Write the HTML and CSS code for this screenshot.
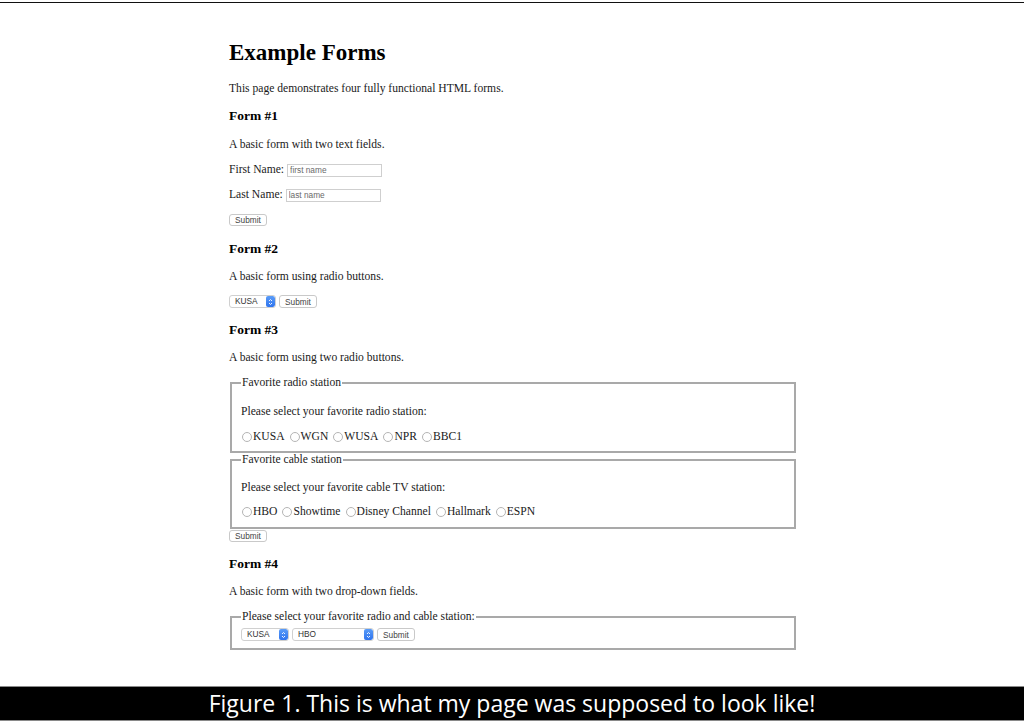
FILE: index.html
```html
<!DOCTYPE html>
<html>
<head>
<meta charset="utf-8">
<title>Example Forms</title>
<link rel="stylesheet" href="styles.css">
</head>
<body>
<div class="topline"></div>
<main class="page">
  <h1 class="title">Example Forms</h1>
  <p class="text intro">This page demonstrates four fully functional HTML forms.</p>

  <h2 class="form-title ft-1">Form #1</h2>
  <p class="text p-1">A basic form with two text fields.</p>
  <form class="form1">
    <div class="row row-first"><label class="text">First Name:</label><input class="field" type="text" placeholder="first name"></div>
    <div class="row row-last"><label class="text">Last Name:</label><input class="field" type="text" placeholder="last name"></div>
    <button class="btn btn-f1" type="button">Submit</button>
  </form>

  <h2 class="form-title ft-2">Form #2</h2>
  <p class="text">A basic form using radio buttons.</p>
  <div class="row row-sel">
    <div class="select sel-kusa"><span class="sel-text">KUSA</span><span class="sel-arrow"><svg width="5" height="8" viewBox="0 0 5 8"><path d="M1 3 L2.5 1.5 L4 3 M1 5 L2.5 6.5 L4 5" fill="none" stroke="#fff" stroke-width="0.9"/></svg></span></div>
    <button class="btn btn-s" type="button">Submit</button>
  </div>

  <h2 class="form-title ft-3">Form #3</h2>
  <p class="text">A basic form using two radio buttons.</p>
  <fieldset class="fs fs1">
    <legend class="legend">Favorite radio station</legend>
    <p class="text fs-p1">Please select your favorite radio station:</p>
    <div class="radios radios1">
      <label class="radio"><input type="radio" name="r">KUSA</label>
      <label class="radio"><input type="radio" name="r">WGN</label>
      <label class="radio"><input type="radio" name="r">WUSA</label>
      <label class="radio"><input type="radio" name="r">NPR</label>
      <label class="radio"><input type="radio" name="r">BBC1</label>
    </div>
  </fieldset>
  <fieldset class="fs fs2">
    <legend class="legend">Favorite cable station</legend>
    <p class="text fs-p2">Please select your favorite cable TV station:</p>
    <div class="radios radios2">
      <label class="radio"><input type="radio" name="c">HBO</label>
      <label class="radio"><input type="radio" name="c">Showtime</label>
      <label class="radio"><input type="radio" name="c">Disney Channel</label>
      <label class="radio"><input type="radio" name="c">Hallmark</label>
      <label class="radio"><input type="radio" name="c">ESPN</label>
    </div>
  </fieldset>
  <button class="btn btn-f3" type="button">Submit</button>

  <h2 class="form-title ft-4">Form #4</h2>
  <p class="text">A basic form with two drop-down fields.</p>
  <fieldset class="fs fs3">
    <legend class="legend">Please select your favorite radio and cable station:</legend>
    <div class="row row-sel2">
      <div class="select sel-kusa2"><span class="sel-text">KUSA</span><span class="sel-arrow"><svg width="5" height="8" viewBox="0 0 5 8"><path d="M1 3 L2.5 1.5 L4 3 M1 5 L2.5 6.5 L4 5" fill="none" stroke="#fff" stroke-width="0.9"/></svg></span></div>
      <div class="select sel-hbo"><span class="sel-text">HBO</span><span class="sel-arrow"><svg width="5" height="8" viewBox="0 0 5 8"><path d="M1 3 L2.5 1.5 L4 3 M1 5 L2.5 6.5 L4 5" fill="none" stroke="#fff" stroke-width="0.9"/></svg></span></div>
      <button class="btn btn-s" type="button">Submit</button>
    </div>
  </fieldset>
</main>
<footer class="caption">Figure 1. This is what my page was supposed to look like!</footer>
</body>
</html>
```
FILE: styles.css
```css
html, body {
  margin: 0;
  padding: 0;
  background: #fff;
}
body {
  width: 1024px;
  height: 722px;
  overflow: hidden;
  font-family: "Liberation Serif", "Times New Roman", serif;
  color: #1a1a1a;
}
.topline {
  margin-top: 2px;
  height: 1px;
  background: #111;
}
.page {
  padding-left: 229px;
  display: flex;
  flex-direction: column;
  align-items: flex-start;
  height: 647px;
}
.title {
  margin: 37px 0 0;
  font-size: 23px;
  line-height: 26px;
  font-weight: bold;
  color: #000;
}
.text {
  margin: 13px 0 0;
  font-size: 11.6px;
  line-height: 14px;
}
.intro { margin-top: 16px; }
.form-title {
  margin: 13px 0 0;
  font-size: 13.5px;
  line-height: 16px;
  font-weight: bold;
  color: #000;
}
.ft-1 { margin-top: 12px; }
.p-1 { margin-top: 14px; }
.ft-2 { margin-top: 15px; }
.ft-3 { margin-top: 14px; }
.ft-4 { margin-top: 14px; }
.form1 {
  display: flex;
  flex-direction: column;
  align-items: flex-start;
  margin: 0;
}
.row {
  display: flex;
  align-items: center;
  height: 14px;
  margin-top: 11px;
}
.row .text { margin: 0; }
.row-first .field { margin-left: 3px; }
.row-last .field { margin-left: 3px; }
.field {
  box-sizing: border-box;
  width: 95px;
  height: 13px;
  border: 1px solid #cfcfcf;
  padding: 0 2px;
  font-family: "Liberation Sans", Arial, sans-serif;
  font-size: 8.3px;
  color: #333;
  outline: none;
}
.field::placeholder { color: #6a6a6a; }
.btn {
  box-sizing: border-box;
  height: 12px;
  width: 38px;
  padding: 0;
  border: 1px solid #c9c9c9;
  border-radius: 3px;
  background: #fff;
  font-family: "Liberation Sans", Arial, sans-serif;
  font-size: 8.3px;
  line-height: 10px;
  color: #444;
}
.btn-f1 { margin-top: 12px; }
.btn-f3 { margin-top: 1px; }
.btn-s { width: 38px; height: 13px; margin-left: 3px; }
.row-sel { margin-top: 11px; height: 13px; }
.select {
  box-sizing: border-box;
  display: flex;
  align-items: stretch;
  height: 13px;
  border: 1px solid #d0d0d0;
  border-radius: 3px;
  background: #fff;
  overflow: hidden;
}
.sel-text {
  flex: 1;
  padding-left: 5px;
  font-family: "Liberation Sans", Arial, sans-serif;
  font-size: 8.3px;
  line-height: 11px;
  color: #333;
}
.sel-arrow {
  width: 9px;
  display: flex;
  align-items: center;
  justify-content: center;
  background: linear-gradient(#5a9cf8, #2f74ee);
  border-radius: 2px;
}
.sel-kusa { width: 47px; }
.sel-kusa2 { width: 48px; }
.sel-hbo { width: 82px; margin-left: 3px; }
.fs {
  box-sizing: border-box;
  width: 566px;
  margin: 0 0 0 1px;
  padding: 0 9px 7px;
  border: 2px solid #a9a9a9;
  min-width: 0;
}
.fs1 { margin-top: 11px; }
.fs2 { padding-bottom: 8px; }
.fs3 { margin-top: 11px; padding-bottom: 7px; }
.legend {
  padding: 0 1px;
  font-size: 11.6px;
  line-height: 14px;
}
.fs .text { margin-left: 0; }
.fs-p1 { margin-top: 15px; }
.fs-p2 { margin-top: 14px; }
.radios {
  display: flex;
  gap: 4px;
  height: 14px;
  align-items: center;
  font-size: 11.6px;
  line-height: 14px;
}
.radios1 { margin-top: 11px; }
.radios2 { margin-top: 10px; }
.radio {
  display: flex;
  align-items: center;
}
.radio input {
  appearance: none;
  -webkit-appearance: none;
  box-sizing: border-box;
  width: 10px;
  height: 10px;
  margin: 0 1px 0 1px;
  border: 1px solid #b5b5b5;
  border-radius: 50%;
  background: #fff;
}
.row-sel2 { margin-top: 4px; height: 13px; }
.caption {
  box-sizing: border-box;
  margin-top: 36px;
  height: 35px;
  background: #000;
  border-top: 1px solid #8a8a8a;
  border-bottom: 1px solid #8a8a8a;
  color: #fff;
  text-align: center;
  font-family: "Open Sans", Lato, sans-serif;
  font-size: 23px;
  line-height: 33px;
}
```
